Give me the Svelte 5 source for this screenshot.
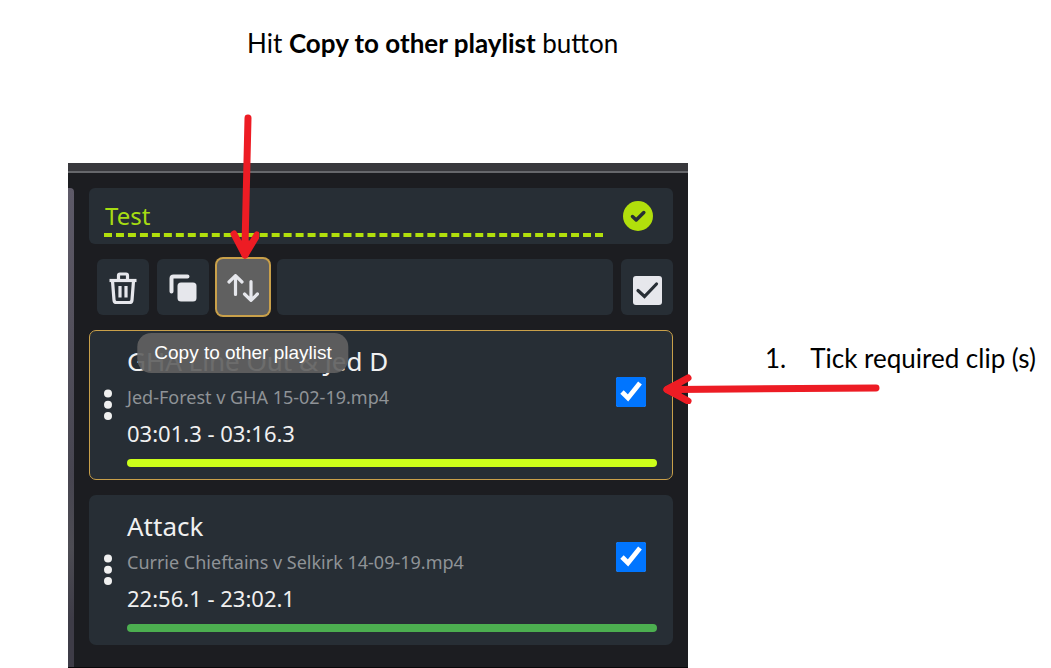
<script lang="ts">
  type Clip = {
    id: number;
    title: string;
    file: string;
    range: string;
    color: string;
    ticked: boolean;
    active: boolean;
  };

  let playlistName = $state('Test');

  let clips = $state<Clip[]>([
    {
      id: 1,
      title: 'GHA Line Out & Jed D',
      file: 'Jed-Forest v GHA 15-02-19.mp4',
      range: '03:01.3 - 03:16.3',
      color: '#ccff1a',
      ticked: true,
      active: true,
    },
    {
      id: 2,
      title: 'Attack',
      file: 'Currie Chieftains v Selkirk 14-09-19.mp4',
      range: '22:56.1 - 23:02.1',
      color: '#4caf50',
      ticked: true,
      active: false,
    },
  ]);

  function toggleAll() {
    const next = !clips.every((clip) => clip.ticked);
    for (const clip of clips) clip.ticked = next;
  }
</script>

{#snippet trashIcon()}
  <svg aria-hidden="true" width="30" height="34" viewBox="0 0 30 34" fill="none" stroke="currentColor">
    <path d="M1.500 9.500H28.500" stroke-width="3.200" />
    <path d="M10.500 9V4.500Q10.500 3 12 3H18Q19.500 3 19.500 4.500V9" stroke-width="3.200" />
    <path d="M4.500 10L6 29Q6.200 31.500 8.500 31.500H21.500Q23.800 31.500 24 29L25.500 10" stroke-width="3.200" />
    <path d="M12 15V26.500M18 15V26.500" stroke-width="3.200" />
  </svg>
{/snippet}

{#snippet copyIcon()}
  <svg aria-hidden="true" width="28" height="28" viewBox="0 0 28 28">
    <path d="M2.500 17.500V4.500Q2.500 2.500 4.500 2.500H18.500" fill="none" stroke="currentColor" stroke-width="4" stroke-linecap="round" />
    <rect x="8.500" y="8.500" width="19" height="19" rx="3.500" fill="currentColor" />
  </svg>
{/snippet}

{#snippet swapIcon()}
  <svg
    aria-hidden="true"
    width="32"
    height="28"
    viewBox="0 0 32 28"
    fill="none"
    stroke="currentColor"
    stroke-width="3.200"
    stroke-linecap="round"
    stroke-linejoin="round"
  >
    <path d="M8.500 20.500V2M2 8L8.500 1.600L15 8" />
    <path d="M24 7.500V26M17.500 20L24 26.400L30.400 20" />
  </svg>
{/snippet}

<main>
  <p class="step">Hit <strong>Copy to other playlist</strong> button</p>

  <div class="board">
    <section class="panel" aria-label="Playlist">
      <div class="rail"></div>
      <div class="content">
        <header>
          <input class="name" type="text" aria-label="Playlist name" bind:value={playlistName} />
          <button class="confirm" aria-label="Confirm name">
            <svg aria-hidden="true" width="30" height="30" viewBox="0 0 30 30">
              <circle cx="15" cy="15" r="15" fill="#b1df0c" />
              <path d="M9.500 15.500L13.200 19L20.800 11.500" fill="none" stroke="#272e35" stroke-width="3.500" stroke-linecap="round" stroke-linejoin="round" />
            </svg>
          </button>
        </header>

        <div class="toolbar">
          <button class="tool" aria-label="Delete">{@render trashIcon()}</button>
          <button class="tool" aria-label="Duplicate">{@render copyIcon()}</button>
          <div class="hovered">
            <button class="tool" aria-describedby="copy-tip" aria-label="Copy to other playlist">
              {@render swapIcon()}
            </button>
            <span class="tooltip" id="copy-tip" role="tooltip">Copy to other playlist</span>
            <svg class="arrow-down" aria-hidden="true" width="30" height="146" viewBox="0 0 30 146">
              <path d="M19 4L16 132" />
              <path d="M5 120L16 141L28 121" />
              <path d="M12 130H20L16 141Z" fill="#ed1c24" />
            </svg>
          </div>
          <div class="filler"></div>
          <button class="tool select-all" aria-label="Select all" onclick={toggleAll}>
            <svg aria-hidden="true" width="29" height="29" viewBox="0 0 29 29">
              <rect width="29" height="29" rx="3" fill="currentColor" />
              <path d="M5 14.500L11.500 20.500L23.500 8" fill="none" stroke="#272e35" stroke-width="3.200" stroke-linecap="round" />
            </svg>
          </button>
        </div>

        {#each clips as clip (clip.id)}
          <article class="clip" class:active={clip.active}>
            <svg class="grip" aria-hidden="true" width="8" height="32" viewBox="0 0 8 32" fill="#f0f0f0">
              <circle cx="4" cy="4.500" r="4" />
              <circle cx="4" cy="15.800" r="4" />
              <circle cx="4" cy="27" r="4" />
            </svg>
            <div class="details">
              <div class="row">
                <div class="texts">
                  <h2>{clip.title}</h2>
                  <p class="file">{clip.file}</p>
                  <p class="range">{clip.range}</p>
                </div>
                <input type="checkbox" aria-label="Select {clip.title}" bind:checked={clip.ticked} />
              </div>
              <div class="bar" style="background: {clip.color}"></div>
            </div>
          </article>
        {/each}
      </div>
    </section>

    <aside>
      <p class="note"><span>1.</span><span>Tick required clip (s)</span></p>
      <svg class="arrow-left" aria-hidden="true" width="220" height="30" viewBox="0 0 220 30">
        <path d="M14 15.500L214 14" />
        <path d="M26 4L5 15.500L26 27" />
        <path d="M5 15.500L16 10V21Z" fill="#ed1c24" />
      </svg>
    </aside>
  </div>
</main>

<style>
  :global(body) {
    background: #fff;
  }

  main {
    --card: #272e35;
    --gold: #c9a04a;
    --icon: #e6e7ec;
    box-sizing: border-box;
    padding: 25px 0 0 68px;
    color: #000;
    font-family: Lato, "Liberation Sans", sans-serif;
    font-size: 26px;
    line-height: 36px;
  }

  p,
  h2 {
    margin: 0;
  }

  .step {
    padding-left: 179px;
    margin-bottom: 102px;
  }

  .board {
    display: grid;
    grid-template-columns: minmax(0, 620fr) minmax(0, 363fr);
  }

  .panel {
    display: flex;
    border-top: 8px solid #38383c;
    border-bottom: 1px solid #08080a;
    background: #1c1d21;
    box-shadow: inset 0 2px #66676b;
    color: #f0f0f0;
    font-family: "Noto Sans", "Open Sans", sans-serif;
  }

  .rail {
    flex-shrink: 0;
    width: 6px;
    margin-top: 17px;
    border-radius: 0 4px 0 0;
    background: linear-gradient(#5e5a68, #55525e 25%, #474550 60%, #4d4c53 75%, #3e3c47 90%);
  }

  .content {
    display: flex;
    flex: 1;
    flex-direction: column;
    gap: 15px;
    min-width: 0;
    padding: 17px 15px 22px;
  }

  button {
    display: flex;
    flex-shrink: 0;
    justify-content: center;
    align-items: center;
    padding: 0;
    border: none;
    background: transparent;
    color: var(--icon);
    cursor: pointer;
  }

  header {
    display: flex;
    justify-content: space-between;
    align-items: center;
    gap: 20px;
    height: 56px;
    padding: 0 20px 0 15px;
    border-radius: 6px;
    background: var(--card);
  }

  .name {
    box-sizing: border-box;
    flex: 1;
    align-self: flex-end;
    min-width: 0;
    height: 40px;
    padding: 0 1px;
    margin-bottom: 7px;
    border: none;
    border-bottom: 4px dashed #b1df0c;
    outline: none;
    background: transparent;
    color: #a6dc12;
    font-family: inherit;
    font-size: 24px;
  }

  .toolbar {
    display: flex;
    gap: 8px;
    padding-left: 8px;
  }

  .tool {
    box-sizing: border-box;
    width: 52px;
    height: 56px;
    padding-top: 2px;
    border-radius: 6px;
    background: var(--card);
  }

  .select-all {
    padding-top: 6px;
  }

  .hovered {
    position: relative;

    & .tool {
      background: #606060;
      box-shadow: 0 0 0 2px var(--gold);
    }
  }

  .tooltip {
    position: absolute;
    z-index: 2;
    top: 74px;
    left: 50%;
    padding: 2px 17px;
    border-radius: 14px;
    background: rgb(97 97 97 / 92%);
    color: #fff;
    font-family: "Liberation Sans", Arial, sans-serif;
    font-size: 19px;
    white-space: nowrap;
    transform: translateX(-50%);
  }

  .arrow-down,
  .arrow-left {
    position: absolute;
    z-index: 3;
    fill: none;
    stroke: #ed1c24;
    stroke-width: 7;
    stroke-linecap: round;
    stroke-linejoin: round;
    pointer-events: none;
  }

  .arrow-down {
    bottom: 55px;
    left: 12px;
  }

  .filler {
    flex: 1;
    border-radius: 6px;
    background: var(--card);
  }

  .clip {
    display: flex;
    align-items: center;
    gap: 15px;
    padding: 12px 15px 12px 14px;
    border: 1px solid transparent;
    border-radius: 7px;
    background: var(--card);

    &.active {
      border-color: var(--gold);
    }
  }

  .grip {
    flex-shrink: 0;
  }

  .details {
    flex: 1;
    min-width: 0;
  }

  .row {
    display: flex;
    justify-content: space-between;
    align-items: flex-start;
  }

  h2 {
    font-size: 26px;
    font-weight: 400;
  }

  .file {
    color: #8f9397;
    font-size: 18px;
  }

  .range {
    font-size: 22px;
  }

  .row input {
    flex-shrink: 0;
    width: 30px;
    height: 30px;
    margin: 34px 11px 0 0;
    accent-color: #0075ff;
  }

  .bar {
    height: 8px;
    margin-top: 8px;
    border-radius: 4px;
  }

  aside {
    position: relative;
    padding: 177px 0 0 77px;
  }

  .note {
    display: flex;
    gap: 24px;
    white-space: nowrap;
  }

  .arrow-left {
    top: 211px;
    left: -26px;
  }
</style>
